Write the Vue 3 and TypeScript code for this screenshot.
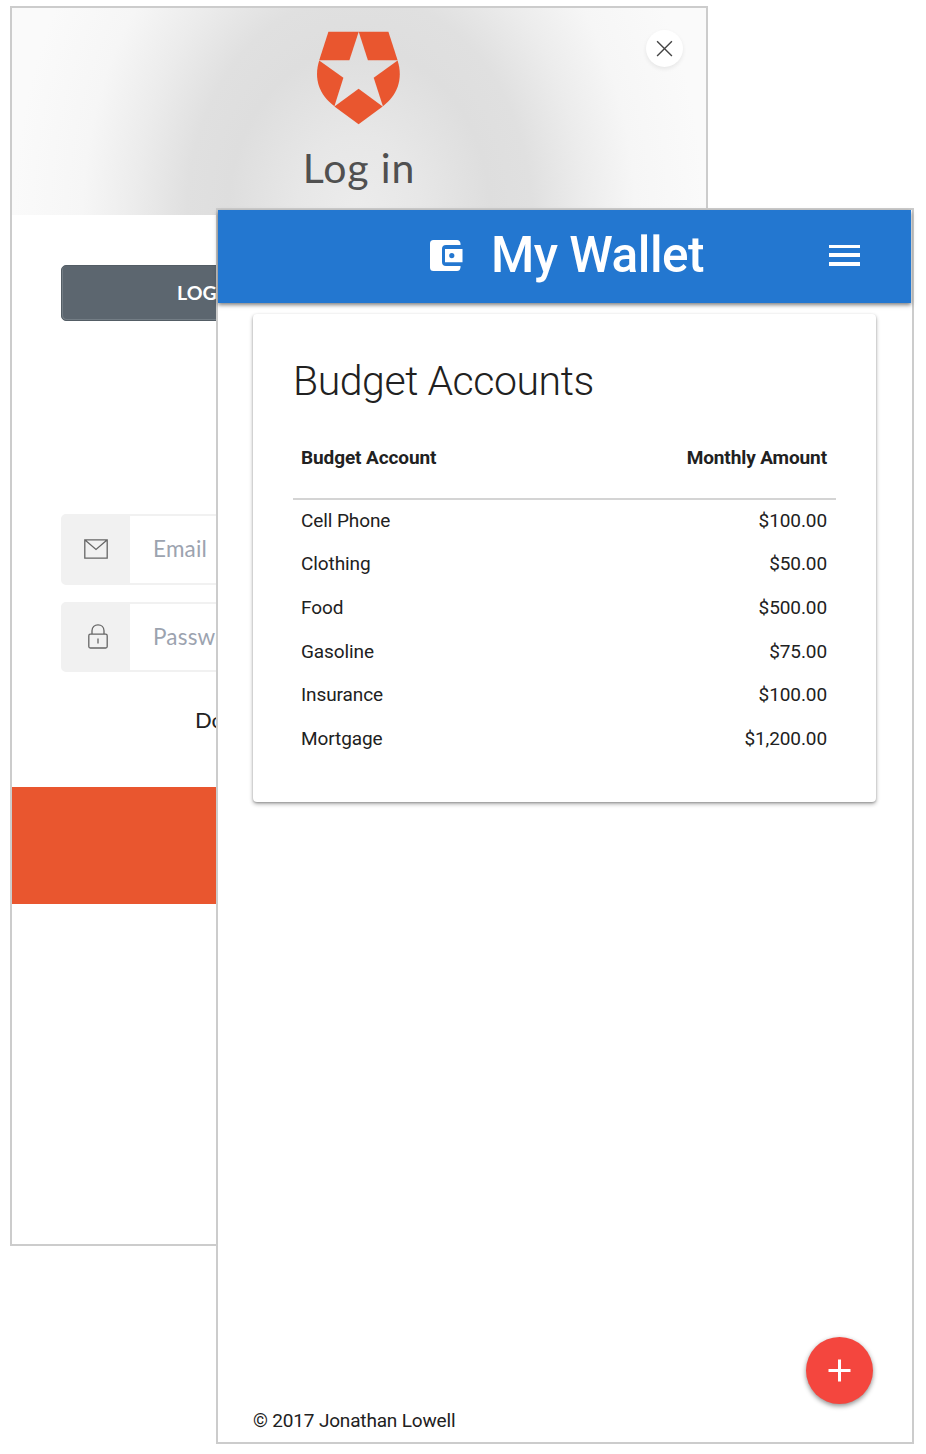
<script setup lang="ts">
interface Account {
  name: string
  amount: number
}

const accounts: Account[] = [
  { name: 'Cell Phone', amount: 100 },
  { name: 'Clothing', amount: 50 },
  { name: 'Food', amount: 500 },
  { name: 'Gasoline', amount: 75 },
  { name: 'Insurance', amount: 100 },
  { name: 'Mortgage', amount: 1200 },
]

const currency = (value: number): string =>
  value.toLocaleString('en-US', { style: 'currency', currency: 'USD' })
</script>

<template>
  <main class="stage">
    <section class="window login">
      <header class="login-head">
        <svg class="shield" viewBox="0.6 0 84 94" fill="#e9562f">
          <path d="M12 .8H42.3L33 29.2H2.8Z" />
          <path d="M42.3 .8H72L81.2 29.2H51.5Z" />
          <path d="M2.8 29.6L27 46.8L18 75.2C3 64.5-3 48 2.8 29.6Z" />
          <path d="M81.2 29.6L57.3 46.8L66.5 75.2C81 64.5 87 48 81.2 29.6Z" />
          <path d="M42.2 57.8L66.3 75.4L42.2 93.2L18 75.4Z" />
        </svg>
        <h1>Log in</h1>
        <button class="close" aria-label="Close">
          <svg viewBox="0.5 0.4 16 16" fill="none" stroke="#454545" stroke-width="1.4"><path d="M.6.6L15.4 15.4M15.4.6L.6 15.4" /></svg>
        </button>
      </header>
      <button class="provider">LOG IN</button>
      <div class="fields">
        <div class="field">
          <div class="field-icon">
            <svg width="24" height="20" viewBox="0 0 24 20" fill="none" stroke="#666" stroke-width="1.3"><path d="M.8.8H23.2V19.2H.8ZM1 1L12 10.5L23 1" /></svg>
          </div>
          <span>Email</span>
        </div>
        <div class="field">
          <div class="field-icon">
            <svg class="lock" width="20" height="25" viewBox="0 0 20 25" fill="none" stroke="#666" stroke-width="1.3"><rect x=".8" y="10.2" width="18.4" height="13.8" rx="1.5" /><path d="M4 10V6.8C4 3 6.6.8 10 .8S16 3 16 6.8V10M10 14.5V19.5" /></svg>
          </div>
          <span>Password</span>
        </div>
      </div>
      <p class="forgot">Don't</p>
      <div class="submit"></div>
    </section>

    <section class="window wallet">
      <header class="bar">
        <svg class="wallet-icon" viewBox="0 0 33 31">
          <path fill="#fff" d="M3.5 0H27Q30 0 30.5 3.5V5H16Q12 5 12 9V22Q12 26 16 26H30.5V27.5Q30 31 27 31H3.5Q0 31 0 27.5V3.5Q0 0 3.5 0Z" />
          <path fill="#fff" fill-rule="evenodd" d="M15 9H32.5V22.3H15ZM21.8 13A2.6 2.6 0 1 0 21.8 18.2A2.6 2.6 0 1 0 21.8 13Z" />
        </svg>
        <h2>My Wallet</h2>
        <div class="menu"><i></i><i></i><i></i></div>
      </header>
      <article class="card">
        <h3>Budget Accounts</h3>
        <table>
          <thead>
            <tr><th>Budget Account</th><th class="num">Monthly Amount</th></tr>
          </thead>
          <tbody>
            <tr v-for="account in accounts" :key="account.name">
              <td>{{ account.name }}</td>
              <td class="num">{{ currency(account.amount) }}</td>
            </tr>
          </tbody>
        </table>
      </article>
      <footer>© 2017 Jonathan Lowell</footer>
      <button class="add" aria-label="Add account">
        <svg width="23" height="23" viewBox="0 0 23 23" stroke="#fff" stroke-width="3"><path d="M11.5 .5V22.5M.5 11.5H22.5" /></svg>
      </button>
    </section>
  </main>
</template>

<style>
body {
  background: #fff;
}
</style>

<style scoped>
* {
  box-sizing: border-box;
}
h1, h2, h3, p {
  margin: 0;
}
button {
  border: 0;
  padding: 0;
}
svg {
  display: block;
  overflow: visible;
}
.stage {
  position: relative;
  width: 926px;
  height: 1454px;
  overflow: hidden;
  background: #fff;
}
.window {
  position: absolute;
  background: #fff;
  border: 2px solid #ccc;
  display: flex;
  flex-direction: column;
}
.login {
  left: 10px;
  top: 6px;
  width: 698px;
  height: 1240px;
  font-family: Lato, sans-serif;
}
.login-head {
  position: relative;
  flex: none;
  height: 207px;
  padding-top: 23px;
  display: flex;
  flex-direction: column;
  align-items: center;
  background: radial-gradient(ellipse 345px 440px at 347px 207px, #ececec 0, #e7e7e7 18%, #dedede 38%, #e0e0e0 50%, #ececec 65%, #f6f6f6 80%, #fafafa 100%);
}
.shield {
  width: 84px;
  height: 94px;
}
h1 {
  margin-top: 18px;
  font-size: 41px;
  line-height: 50px;
  font-weight: 400;
  letter-spacing: 0.9px;
  color: #505050;
}
.close {
  position: absolute;
  right: 23px;
  top: 22px;
  width: 37px;
  height: 37px;
  border-radius: 50%;
  background: #fff;
  box-shadow: 0 2px 4px rgba(0, 0, 0, 0.08);
  display: flex;
  align-items: center;
  justify-content: center;
}
.close svg {
  width: 16px;
  height: 16px;
}
.provider {
  flex: none;
  margin: 50px 49px 0;
  height: 56px;
  padding-left: 115px;
  border: 1px solid #535d65;
  border-radius: 5px;
  box-shadow: inset 1px -1px 0 #737d85;
  background: #5c666f;
  color: #fff;
  text-align: left;
  font: 700 19.5px/54px Lato, sans-serif;
}
.fields {
  margin: 193px 49px 0;
  display: flex;
  flex-direction: column;
  gap: 17px;
}
.field {
  display: flex;
  height: 70.5px;
  border: 2px solid #f1f1f1;
  border-radius: 5px;
  color: #9ca3af;
  font-size: 22.5px;
  line-height: 65px;
  letter-spacing: 0.2px;
}
.field-icon {
  width: 67px;
  padding-right: 1px;
  margin-right: 23px;
  background: #f1f1f1;
  display: flex;
  align-items: center;
  justify-content: center;
}
.lock {
  margin-left: 3px;
}
.forgot {
  margin: 33px 0 0 183px;
  font-size: 22px;
  line-height: 30px;
  color: #222;
}
.submit {
  margin-top: 51.5px;
  height: 117.5px;
  background: #e9562f;
}
.wallet {
  left: 216px;
  top: 208px;
  width: 698px;
  height: 1236px;
  font-family: Roboto, sans-serif;
  color: #212121;
}
.bar {
  flex: none;
  width: 692.6px;
  height: 92.5px;
  padding: 0 51px 2px 211.5px;
  display: flex;
  align-items: center;
  background: #2377d0;
  color: #fff;
  box-shadow: 0 2px 4px rgba(0, 0, 0, 0.5);
}
.wallet-icon {
  width: 33px;
  height: 31px;
}
h2 {
  margin: 0 0 1px 28.5px;
  font-size: 49.5px;
  line-height: 60px;
  font-weight: 500;
  letter-spacing: -0.5px;
  white-space: nowrap;
}
.menu {
  margin-left: auto;
  width: 31px;
  display: flex;
  flex-direction: column;
  gap: 5px;
}
.menu i {
  height: 3.6px;
  background: #fff;
}
.card {
  margin: 11.5px 0 0 35px;
  width: 623px;
  height: 488px;
  padding: 40px 40px 0;
  border-radius: 4px;
  box-shadow: 0 2px 4px rgba(0, 0, 0, 0.32), 0 1px 2px rgba(0, 0, 0, 0.2);
}
h3 {
  font-size: 41px;
  line-height: 54px;
  font-weight: 300;
  letter-spacing: -0.45px;
  white-space: nowrap;
}
table {
  margin-top: 9px;
  width: 543px;
  border-collapse: separate;
  border-spacing: 0;
  font-size: 19px;
  letter-spacing: -0.1px;
}
th {
  height: 83px;
  padding: 0 9px 0 8px;
  font-weight: 700;
  text-align: left;
  border-bottom: 2px solid #d4d4d4;
}
td {
  height: 43.6px;
  padding: 0 9px 3px 8px;
}
.num {
  text-align: right;
}
footer {
  margin: auto 0 8px 35px;
  font-size: 19px;
  line-height: 26px;
  letter-spacing: -0.17px;
}
.add {
  position: absolute;
  right: 39px;
  bottom: 38.5px;
  width: 67px;
  height: 67px;
  border-radius: 50%;
  background: #f4463e;
  box-shadow: 0 2px 5px rgba(0, 0, 0, 0.45);
  display: flex;
  align-items: center;
  justify-content: center;
}
</style>
